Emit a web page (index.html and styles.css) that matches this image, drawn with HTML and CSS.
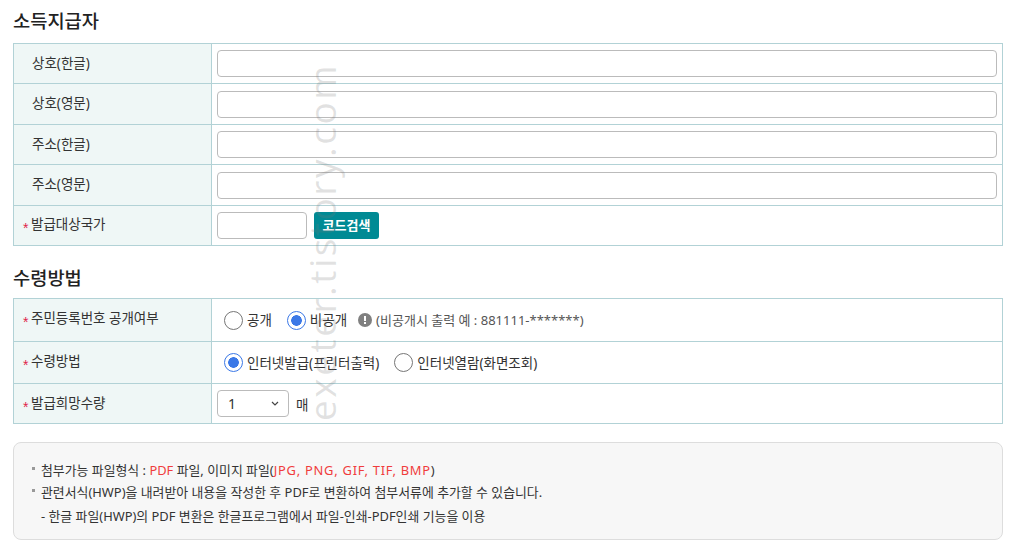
FILE: index.html
```html
<!DOCTYPE html>
<html lang="ko">
<head>
  <meta charset="utf-8">
  <title>소득지급자</title>
  <link rel="stylesheet" href="styles.css">
</head>
<body>
  <h2 class="section-title">소득지급자</h2>
  <table class="form-table alternating">
    <tr>
      <th>상호(한글)</th>
      <td><input class="text-input" type="text"></td>
    </tr>
    <tr>
      <th>상호(영문)</th>
      <td><input class="text-input" type="text"></td>
    </tr>
    <tr>
      <th>주소(한글)</th>
      <td><input class="text-input" type="text"></td>
    </tr>
    <tr>
      <th>주소(영문)</th>
      <td><input class="text-input" type="text"></td>
    </tr>
    <tr>
      <th class="required">발급대상국가</th>
      <td>
        <div class="field-row">
          <input class="text-input short" type="text">
          <button class="code-button" type="button">코드검색</button>
        </div>
      </td>
    </tr>
  </table>

  <h2 class="section-title second">수령방법</h2>
  <table class="form-table">
    <tr class="row-tall">
      <th class="required">주민등록번호 공개여부</th>
      <td>
        <div class="field-row radios">
          <label class="radio"><input type="radio" name="open"><span class="label-text">공개</span></label>
          <label class="radio"><input type="radio" name="open" checked><span class="label-text">비공개</span></label>
          <span class="hint">
            <svg class="hint-icon" viewBox="0 0 14 14" width="14" height="14">
              <circle cx="7" cy="7" r="7" fill="#808080"/>
              <rect x="6" y="3" width="2" height="5" fill="#fff"/>
              <rect x="6" y="9" width="2" height="2" fill="#fff"/>
            </svg>
            <span class="label-text">(비공개시 출력 예 : 881111-*******)</span>
          </span>
        </div>
      </td>
    </tr>
    <tr class="row-mid">
      <th class="required">수령방법</th>
      <td>
        <div class="field-row radios">
          <label class="radio"><input type="radio" name="how" checked><span class="label-text">인터넷발급(프린터출력)</span></label>
          <label class="radio"><input type="radio" name="how"><span class="label-text">인터넷열람(화면조회)</span></label>
        </div>
      </td>
    </tr>
    <tr class="row-last">
      <th class="required">발급희망수량</th>
      <td>
        <div class="field-row">
          <div class="select-wrap">
            <select class="count-select">
              <option>1</option>
              <option>2</option>
              <option>3</option>
            </select>
            <svg class="chevron" viewBox="0 0 8 5" width="8" height="5">
              <path d="M1 1l3 3 3-3" fill="none" stroke="#444" stroke-width="1.2"/>
            </svg>
          </div>
          <span class="unit">매</span>
        </div>
      </td>
    </tr>
  </table>

  <div class="notice">
    <p class="bullet">첨부가능 파일형식 : <em>PDF</em> 파일, 이미지 파일(<em class="ext-list">JPG, PNG, GIF, TIF, BMP</em>)</p>
    <p class="bullet">관련서식(HWP)을 내려받아 내용을 작성한 후 PDF로 변환하여 첨부서류에 추가할 수 있습니다.</p>
    <p class="sub">- 한글 파일(HWP)의 PDF 변환은 한글프로그램에서 파일-인쇄-PDF인쇄 기능을 이용</p>
  </div>

  <div class="watermark">exeter.tistory.com</div>
</body>
</html>
```

FILE: styles.css
```css
* {
  box-sizing: border-box;
}

body {
  margin: 0;
  padding: 0 9px 0 13px;
  font-family: "Noto Sans", "Noto Sans CJK KR", sans-serif;
  font-size: 13.5px;
  color: #333;
  background-color: #fff;
}

.section-title {
  margin: 0;
  height: 43px;
  padding-top: 7px;
  font-size: 18.7px;
  line-height: 27px;
  font-weight: 500;
  color: #222;
}

.section-title.second {
  height: 52px;
  padding-top: 18px;
}

.form-table {
  width: 990px;
  border-collapse: collapse;
  table-layout: fixed;
  border: 1px solid #b2d2d6;
}

.form-table tr {
  height: 40px;
}

.form-table.alternating tr:nth-child(even) {
  height: 41px;
}

.form-table tr.row-tall {
  height: 43px;
}

.form-table tr.row-mid {
  height: 42px;
}

.form-table th,
.form-table td {
  border: 1px solid #b2d2d6;
  padding: 0 5px;
}

.form-table th {
  width: 198px;
  padding: 0 5px 4px 18px;
  background-color: #eff7f6;
  font-weight: 400;
  text-align: left;
  color: #333;
}

.form-table .row-last th {
  padding-bottom: 2px;
}

.form-table th.required {
  padding-left: 9px;
}

.form-table th.required::before {
  content: "*";
  display: inline-block;
  width: 8px;
  font-family: "Liberation Sans", sans-serif;
  font-size: 14px;
  line-height: 1;
  vertical-align: -4px;
  color: #e0244a;
}

.field-row {
  display: flex;
  align-items: center;
}

.radios {
  padding-left: 7px;
  gap: 15px;
}

.text-input {
  display: block;
  width: 100%;
  height: 27px;
  border: 1px solid #bbb;
  border-radius: 4px;
  background-color: #fff;
}

.text-input.short {
  width: 90px;
}

.code-button {
  height: 27px;
  width: 65px;
  margin-left: 7px;
  padding: 0 0 2px;
  border: 0;
  border-radius: 3px;
  background-color: #008a94;
  color: #fff;
  font-family: inherit;
  font-size: 13px;
  font-weight: 700;
}

.radio {
  display: flex;
  align-items: center;
  gap: 4px;
}

.radio input {
  appearance: none;
  width: 19px;
  height: 19px;
  margin: 0;
  border: 1px solid #767676;
  border-radius: 50%;
  background-color: #fff;
}

.radio input:checked {
  border-color: #3b78e7;
  background: radial-gradient(circle, #3b78e7 0, #3b78e7 5px, #fff 5.6px);
}

.label-text {
  padding-bottom: 2px;
}

.hint {
  display: flex;
  align-items: center;
  gap: 4px;
  margin-left: -4px;
  font-size: 13px;
  color: #555;
}

.select-wrap {
  position: relative;
  width: 72px;
  height: 27px;
}

.count-select {
  appearance: none;
  width: 100%;
  height: 100%;
  padding: 0 0 0 10px;
  border: 1px solid #bbb;
  border-radius: 4px;
  background-color: #fff;
  font-family: inherit;
  font-size: 14px;
  color: #333;
}

.chevron {
  position: absolute;
  top: 11px;
  right: 10px;
}

.unit {
  margin-left: 7px;
}

.notice {
  width: 990px;
  height: 98px;
  margin-top: 18px;
  padding: 16px 17px;
  border: 1px solid #ddd;
  border-radius: 8px;
  background-color: #f7f7f7;
  font-size: 12.9px;
  color: #333;
}

.notice p {
  margin: 0;
  line-height: 22px;
}

.notice em {
  font-style: normal;
  color: #f03c3c;
}

.notice .ext-list {
  letter-spacing: 0.75px;
}

.notice .bullet {
  position: relative;
  padding-left: 10px;
}

.notice .bullet::before {
  content: "";
  position: absolute;
  left: 1px;
  top: 8px;
  width: 3px;
  height: 3px;
  background-color: #999;
}

.notice .sub {
  margin-top: 2px;
  padding-left: 10px;
}

.watermark {
  position: absolute;
  left: 321px;
  top: 242px;
  transform: translate(-50%, -50%) rotate(-90deg);
  font-family: "Open Sans", sans-serif;
  font-size: 37px;
  line-height: 1;
  letter-spacing: 2.5px;
  white-space: nowrap;
  color: rgba(120, 120, 120, 0.22);
  pointer-events: none;
}
```
